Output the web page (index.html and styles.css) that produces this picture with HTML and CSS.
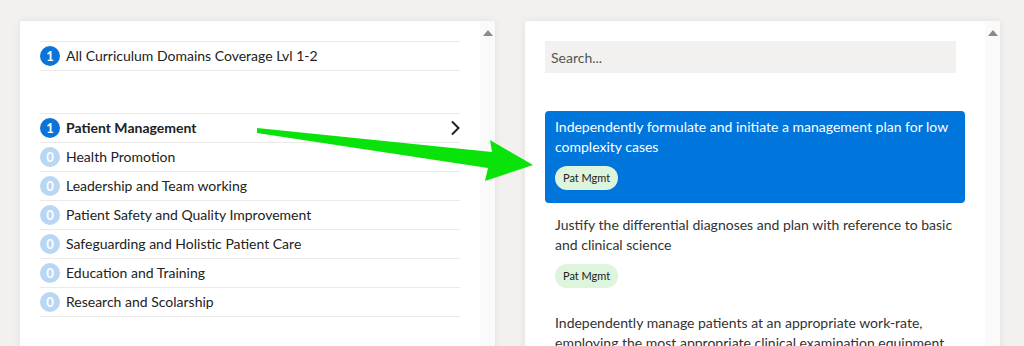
FILE: index.html
```html
<!DOCTYPE html>
<html lang="en">
<head>
    <meta charset="UTF-8">
    <meta name="viewport" content="width=device-width, initial-scale=1.0">
    <title>Curriculum</title>
    <link rel="stylesheet" href="styles.css">
</head>
<body>
    <div class="wrapper">
        <div class="card">
            <div class="content">
                <div class="list">
                    <div class="row"><span class="badge">1</span>All Curriculum Domains Coverage Lvl 1-2</div>
                </div>
                <div class="list domains">
                    <div class="row active"><span class="badge">1</span>Patient Management
                        <svg class="chevron" width="10" height="16" viewBox="0 0 10 16"><polyline points="2,1.5 8.5,8 2,14.5" fill="none" stroke="#222" stroke-width="2"/></svg>
                    </div>
                    <div class="row"><span class="badge empty">0</span>Health Promotion</div>
                    <div class="row"><span class="badge empty">0</span>Leadership and Team working</div>
                    <div class="row"><span class="badge empty">0</span>Patient Safety and Quality Improvement</div>
                    <div class="row"><span class="badge empty">0</span>Safeguarding and Holistic Patient Care</div>
                    <div class="row"><span class="badge empty">0</span>Education and Training</div>
                    <div class="row"><span class="badge empty">0</span>Research and Scolarship</div>
                </div>
            </div>
            <div class="scrollbar"><span class="up"></span></div>
        </div>

        <div class="card">
            <div class="content">
                <input class="search" type="text" placeholder="Search...">
                <div class="outcomes">
                    <div class="outcome selected">
                        <p>Independently formulate and initiate a management plan for low complexity cases</p>
                        <span class="tag">Pat Mgmt</span>
                    </div>
                    <div class="outcome">
                        <p>Justify the differential diagnoses and plan with reference to basic and clinical science</p>
                        <span class="tag">Pat Mgmt</span>
                    </div>
                    <div class="outcome">
                        <p>Independently manage patients at an appropriate work-rate, employing the most appropriate clinical examination equipment</p>
                        <span class="tag">Pat Mgmt</span>
                    </div>
                </div>
            </div>
            <div class="scrollbar"><span class="up"></span></div>
        </div>
    </div>

    <!-- annotation arrow drawn over the screenshot -->
    <svg class="pointer" width="1024" height="346" viewBox="0 0 1024 346">
        <polygon points="257,128 492,152 490,140 533,165 485,181 488,168 257,133" fill="#0ae30a"/>
    </svg>
</body>
</html>
```

FILE: styles.css
```css
body{
    margin: 0;
    background: #f2f1f0;
    font-family: Lato, "Open Sans", sans-serif;
    font-size: 14px;
    color: #222;
    overflow: hidden;
    height: 346px;
}
.wrapper{
    display: flex;
    gap: 30px;
    padding: 21px 0 0 20px;
}
.card{
    width: 475px;
    height: 400px;
    display: flex;
    background: #fff;
    border-radius: 3px;
    box-shadow: 0 0 8px rgba(0,0,0,0.07);
}
.content{
    flex: 1;
    padding: 20px;
}
.scrollbar{
    width: 15px;
    background: #fafafa;
    display: flex;
    justify-content: center;
    padding-top: 9px;
    border-radius: 0 3px 0 0;
}
.up{
    width: 0;
    height: 0;
    border-left: 5px solid transparent;
    border-right: 5px solid transparent;
    border-bottom: 6px solid #8a8a8a;
}
.list{
    border-top: 1px solid #eceae9;
}
.domains{
    margin-top: 42px;
}
.row{
    height: 28px;
    display: flex;
    align-items: center;
    border-bottom: 1px solid #eceae9;
    line-height: 18px;
    padding-bottom: 1px;
    box-sizing: border-box;
    height: 29px;
}
.row.active{
    font-weight: bold;
}
.chevron{
    margin-left: auto;
}
.badge{
    width: 20px;
    height: 20px;
    border-radius: 50%;
    background: #0b74d9;
    color: #fff;
    font-weight: bold;
    font-size: 13px;
    display: flex;
    align-items: center;
    justify-content: center;
    margin-right: 6px;
}
.badge.empty{
    background: #b7d7f4;
}
.search{
    display: block;
    width: 411px;
    height: 32px;
    box-sizing: border-box;
    border: none;
    background: #f2f1f0;
    padding: 0 6px;
    font-family: Lato, sans-serif;
    font-size: 14px;
    color: #333;
    outline: none;
}
.search::placeholder{
    color: #555;
}
.outcomes{
    margin-top: 38px;
}
.outcome{
    padding: 6px 10px 13px;
    margin-bottom: 6px;
    border-radius: 4px;
    color: #333;
}
.outcome p{
    margin: 0 0 9px;
    line-height: 20px;
}
.outcome.selected{
    background: #0075dc;
    color: #fff;
}
.tag{
    display: inline-block;
    height: 24px;
    line-height: 24px;
    padding: 0 8px;
    border-radius: 12px;
    background: #ddf4dd;
    color: #222;
    font-size: 11px;
}
.pointer{
    position: absolute;
    left: 0;
    top: 0;
    pointer-events: none;
}
```
